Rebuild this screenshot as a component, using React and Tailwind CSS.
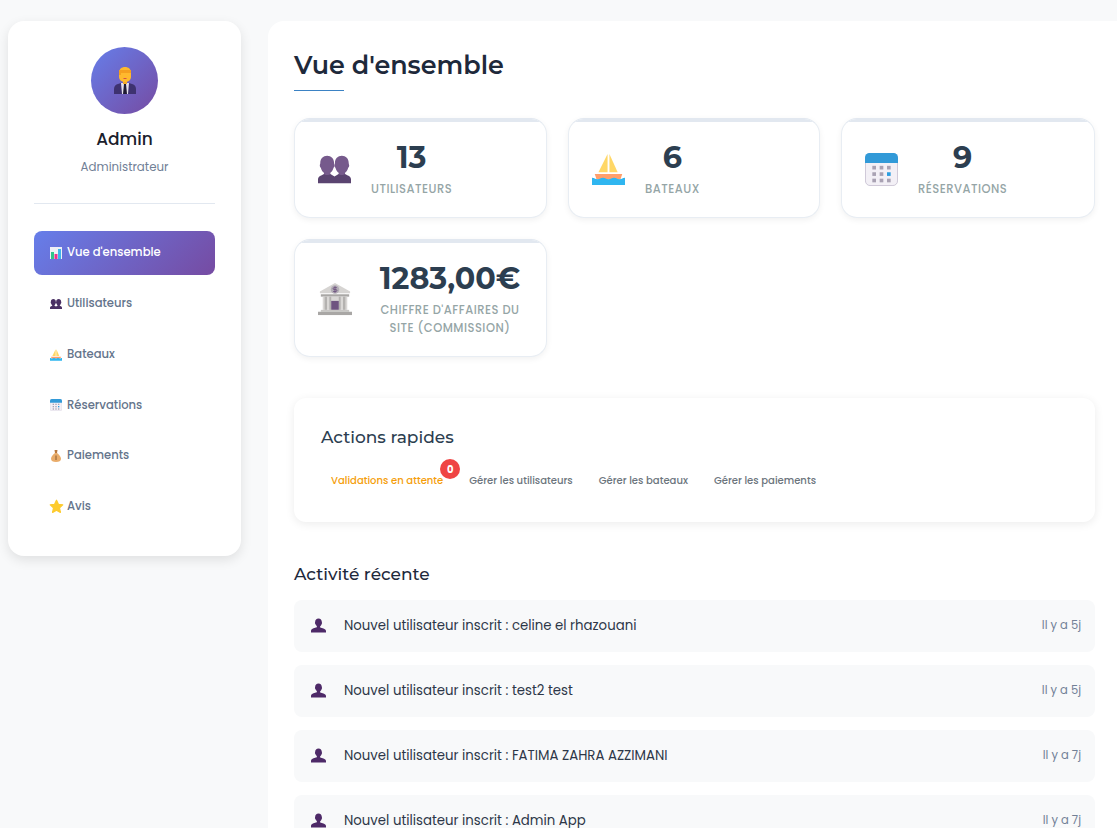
const sans = "font-['Poppins','Inter','Noto_Sans',sans-serif]"

function People({ size, dark = '#4a2f63', light = '#4a2f63' }) {
  return (
    <svg width={size} height={size} viewBox="0 0 36 36">
      <path fill={light} d="M10 3c4.400 0 7.500 3.300 7.500 8 0 1.200.700 1.800.500 3.200-.200 1.300-1 1.700-1.300 2.600-.600 2-1.700 3.700-3.200 4.700V26H6.500v-4.500c-1.500-1-2.600-2.700-3.200-4.700-.300-.900-1.100-1.300-1.300-2.600-.200-1.400.500-2 .500-3.200C2.500 6.300 5.600 3 10 3z" />
      <path fill={light} d="M26 3c4.400 0 7.500 3.300 7.500 8 0 1.200.700 1.800.500 3.200-.200 1.300-1 1.700-1.300 2.600-.600 2-1.700 3.700-3.200 4.700V26h-7v-4.500c-1.500-1-2.600-2.700-3.200-4.700-.300-.900-1.100-1.300-1.300-2.600-.200-1.400.500-2 .500-3.200C18.500 6.300 21.600 3 26 3z" />
      <path fill={dark} d="M0 33v-4c0-2.500 1.500-3.800 3.500-4.500l3-1.500c1.500 1.500 5.500 1.500 7 0l4.500 2.500L22.500 23c1.500 1.500 5.500 1.500 7 0l3 1.500c2 .700 3.500 2 3.500 4.500v4z" />
    </svg>
  )
}

function Person({ size }) {
  return (
    <svg width={size} height={size} viewBox="0 0 36 36">
      <path fill="#4e2a68" d="M18 1c5 0 8 3.800 8 8.500 0 1.200.800 1.800.500 3.300-.200 1.200-1 1.600-1.300 2.500-.600 1.900-1.700 3.400-3.200 4.500v2.700l8 2.500c3.200 1 6 3 6 6V35H0v-4.500c0-3 2.800-5 6-6l8-2.500v-2.700c-1.500-1.100-2.600-2.600-3.200-4.500-.300-.900-1.100-1.300-1.300-2.500-.300-1.500.500-2.100.500-3.300C10 4.800 13 1 18 1z" />
    </svg>
  )
}

function Boat({ size }) {
  return (
    <svg width={size} height={size} viewBox="0 0 36 36">
      <path fill="#ffd766" d="M17 1v20H7z" />
      <path fill="#ffd766" d="M19 1l9 20h-9z" />
      <path fill="#ff9f6b" d="M3 23h30l-2 6H5z" />
      <path fill="#2fb6f0" d="M0 27c3 0 3 1.500 6 1.500S9 27 12 27s3 1.500 6 1.500 3-1.500 6-1.500 3 1.500 6 1.500 3-1.500 6-1.500v8H0z" />
    </svg>
  )
}

function Calendar({ size }) {
  const dots = [
    [8, 14], [16, 14], [24, 14],
    [8, 21], [16, 21], [24, 21],
    [8, 28], [16, 28], [24, 28],
  ]
  return (
    <svg width={size} height={size} viewBox="0 0 36 36">
      <rect x="0.500" y="0.500" width="35" height="35" rx="5" fill="#f3f0f6" stroke="#c9c3d3" />
      <path fill="#329ad8" d="M0 11V5a5 5 0 0 1 5-5h26a5 5 0 0 1 5 5v6z" />
      {dots.map(([x, y], i) => (
        <rect key={i} x={x} y={y} width="4" height="4" fill={i === 5 ? '#2a9de0' : '#a9a2b3'} />
      ))}
    </svg>
  )
}

function Bank({ size }) {
  return (
    <svg width={size} height={size} viewBox="0 0 36 36">
      <path fill="#d6d4d2" d="M18 1l16 9v2H2v-2z" />
      <circle cx="18" cy="8" r="4.500" fill="#b3aeb6" />
      <path d="M20 6h-3a1 1 0 0 0 0 2h2a1 1 0 0 1 0 2h-3M18 4.500v7" stroke="#6f5480" strokeWidth="1" fill="none" />
      <rect x="3" y="13" width="30" height="2.500" fill="#a9a7a5" />
      <rect x="5" y="15.500" width="26" height="14" fill="#dad8d6" />
      <rect x="7" y="15.500" width="2.500" height="14" fill="#b4b2b0" />
      <rect x="12" y="15.500" width="2" height="14" fill="#b4b2b0" />
      <rect x="22" y="15.500" width="2" height="14" fill="#b4b2b0" />
      <rect x="26.500" y="15.500" width="2.500" height="14" fill="#b4b2b0" />
      <rect x="14" y="20" width="8" height="9.500" fill="#6f5480" />
      <rect x="3" y="29.500" width="30" height="2" fill="#c8c6c4" />
      <rect x="0" y="31.500" width="36" height="3.500" fill="#a9a7a5" />
    </svg>
  )
}

function Chart({ size }) {
  return (
    <svg width={size} height={size} viewBox="0 0 12 12">
      <rect width="12" height="12" fill="#eef0f6" />
      <rect x="1" y="5" width="3" height="7" fill="#2fc58a" />
      <rect x="4.500" y="7" width="3" height="5" fill="#ef2f8c" />
      <rect x="8" y="2" width="3" height="10" fill="#3fb4ea" />
    </svg>
  )
}

function MoneyBag({ size }) {
  return (
    <svg width={size} height={size} viewBox="0 0 12 12">
      <path fill="#b9793f" d="M4.500 0h3L7 3H5z" />
      <path fill="#e9ac6a" d="M5 3h2c1.500 1.300 4 3.300 4 5.700C11 11 9 12 6 12s-5-1-5-3.300C1 6.300 3.500 4.300 5 3z" />
      <path fill="#8a5a2e" d="M5.500 5.500h1v4.500h-1z" />
    </svg>
  )
}

function Star({ size }) {
  return (
    <svg className="shrink-0" width={size} height={size} viewBox="0 0 24 24">
      <path fill="#fdcb2e" stroke="#fdcb2e" strokeWidth="2" strokeLinejoin="round" d="M12 2l3 6.500 7 .800-5.200 4.900 1.400 7.300L12 17.900l-6.200 3.600 1.400-7.300L2 9.300l7-.800z" />
    </svg>
  )
}

function Admin() {
  return (
    <svg width="22" height="27" viewBox="0 0 22 27">
      <path fill="#3e3270" d="M0 27v-5c0-3 2-4.500 4-5l3-1h8l3 1c2 .500 4 2 4 5v5z" />
      <path fill="#e6e0ee" d="M7 16h8l-1 11H8z" />
      <path fill="#1f1a33" d="M10 17h2l1 10H9z" />
      <rect x="9" y="12" width="4" height="5" fill="#f2a92a" />
      <path fill="#ffb92e" d="M5 6c0-4 2.500-6 6-6s6 2 6 6v4c0 3-3 5-6 5s-6-2-6-5z" />
      <path fill="#f59f1f" d="M5 3h12v3H7v2H5z" />
      <rect x="9.500" y="11" width="3" height="1" fill="#d5504a" />
    </svg>
  )
}

const navItems = [
  { label: "Vue d'ensemble", icon: <Chart size={12} />, active: true },
  { label: 'Utilisateurs', icon: <People size={12} /> },
  { label: 'Bateaux', icon: <Boat size={12} /> },
  { label: 'Réservations', icon: <Calendar size={12} /> },
  { label: 'Paiements', icon: <MoneyBag size={12} /> },
  { label: 'Avis', icon: <Star size={15} /> },
]

const activities = [
  { text: 'Nouvel utilisateur inscrit : celine el rhazouani', time: 'Il y a 5j' },
  { text: 'Nouvel utilisateur inscrit : test2 test', time: 'Il y a 5j' },
  { text: 'Nouvel utilisateur inscrit : FATIMA ZAHRA AZZIMANI', time: 'Il y a 7j' },
  { text: 'Nouvel utilisateur inscrit : Admin App', time: 'Il y a 7j' },
]

function StatCard({ icon, value, label, tall }) {
  return (
    <div className={`flex flex-col overflow-hidden rounded-2xl border border-[#e8edf3] border-t-[#e2e8f0] bg-white shadow-[0_2px_6px_rgba(0,0,0,0.06)] ${tall ? 'h-[118px]' : 'h-[100px]'}`}>
      <div className="h-[3px] shrink-0 bg-[#e2e8f0]" />
      <div className="flex flex-1 items-center gap-[20px] pl-[23px] pr-5 pt-[2px]">
        <div className="mb-[3px] shrink-0">{icon}</div>
        <div className={`flex flex-col items-center text-center ${tall ? 'ml-[7px] w-[142px]' : ''}`}>
          <div className="font-['Montserrat','Inter',sans-serif] text-[30.200px] font-bold leading-none text-[#2c3e50]">{value}</div>
          <div className="mt-[7px] text-[11.500px] font-medium uppercase leading-[18px] tracking-[0.5px] text-[#95a5a6]">{label}</div>
        </div>
      </div>
    </div>
  )
}

export default function App() {
  return (
    <div className={`flex h-screen items-start overflow-hidden bg-[#f8f9fa] ${sans}`}>
      <aside className="ml-2 mt-[21px] flex h-[535px] w-[233px] shrink-0 flex-col rounded-2xl bg-white px-[26px] pt-[26px] shadow-[0_4px_12px_rgba(0,0,0,0.1)]">
        <div className="flex flex-col items-center border-b border-[#e2e8f0] pb-[27px]">
          <div className="flex h-[67px] w-[67px] items-center justify-center rounded-full bg-[linear-gradient(135deg,#667eea_0%,#764ba2_100%)]">
            <Admin />
          </div>
          <h2 className="mt-[13px] text-[17px] font-medium leading-[24px] text-[#1a202c]">Admin</h2>
          <p className="mt-[7px] text-[11.800px] leading-[18px] text-[#718096]">Administrateur</p>
        </div>
        <nav className="mt-[27px] flex flex-col gap-[6.800px]">
          {navItems.map((item) => (
            <div
              key={item.label}
              className={`flex h-[44px] items-center gap-[5px] rounded-lg px-4 text-[11.600px] font-medium ${item.active ? 'bg-[linear-gradient(135deg,#667eea_0%,#764ba2_100%)] text-white' : 'text-[#64748b]'}`}
            >
              <div className="flex w-[12px] justify-center">{item.icon}</div>
              <span>{item.label}</span>
            </div>
          ))}
        </nav>
      </aside>

      <main className="ml-[27px] mt-[21px] min-h-[900px] flex-1 rounded-tl-2xl bg-white pl-[26px] pr-[22px] pt-[26px]">
        <h1 className="w-fit font-['Montserrat','Inter',sans-serif] text-[25.400px] font-semibold leading-[36px] text-[#1e293b]">Vue d'ensemble</h1>
        <div className="mt-[7px] h-px w-[50px] bg-[#3b82c4]" />

        <div className="mt-[27px] grid grid-cols-[253px_252px_254px] gap-x-[21px] gap-y-[21px]">
          <StatCard icon={<People size={33} dark="#5a4470" light="#765a8c" />} value="13" label="Utilisateurs" />
          <StatCard icon={<Boat size={33} />} value="6" label="Bateaux" />
          <StatCard icon={<Calendar size={33} />} value="9" label="Réservations" />
          <StatCard icon={<Bank size={34} />} value="1283,00€" label="Chiffre d'affaires du site (commission)" tall />
        </div>

        <section className="mt-[41px] h-[124px] rounded-xl bg-white px-[27px] pt-[28px] shadow-[0_2px_10px_rgba(0,0,0,0.08)]">
          <h3 className="font-['Montserrat','Inter',sans-serif] text-[17px] font-medium leading-[22px] text-[#2c3e50]">Actions rapides</h3>
          <div className="mt-[25px] flex items-center gap-[26px] pl-[10px] text-[10.050px] font-medium text-[#6c757d]">
            <span className="relative text-[#f59e0b]">
              Validations en attente
              <span className="absolute -right-[17px] -top-[14px] flex h-5 w-5 items-center justify-center rounded-full bg-[#ef4444] text-[10px] font-bold text-white">0</span>
            </span>
            <span>Gérer les utilisateurs</span>
            <span>Gérer les bateaux</span>
            <span>Gérer les paiements</span>
          </div>
        </section>

        <h3 className="mt-[41px] font-['Montserrat','Inter',sans-serif] text-[17px] font-medium leading-[22px] text-[#1e293b]">Activité récente</h3>
        <div className="mt-[15px] flex flex-col gap-[13px]">
          {activities.map((a) => (
            <div key={a.text} className="flex h-[52px] items-center rounded-lg bg-[#f8f9fa] pl-[17px] pr-[14px]">
              <div className="mb-[2px]"><Person size={15} /></div>
              <span className="ml-[18px] text-[13.300px] text-[#2d3748]">{a.text}</span>
              <span className="ml-auto text-[11.500px] text-[#718096]">{a.time}</span>
            </div>
          ))}
        </div>
      </main>
    </div>
  )
}
